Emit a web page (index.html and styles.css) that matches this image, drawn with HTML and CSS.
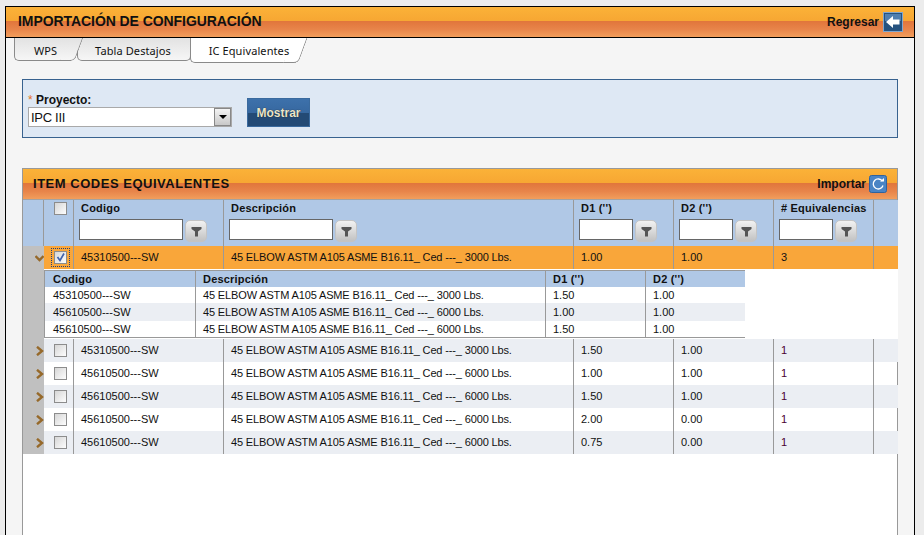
FILE: index.html
```html
<!DOCTYPE html>
<html lang="es">
<head>
    <meta charset="UTF-8">
    <title>Importación de Configuración</title>
    <link rel="stylesheet" href="styles.css">
</head>
<body>

<div class="ventana">
    <div class="barra barra-principal">
        <span class="barra-titulo">IMPORTACIÓN DE CONFIGURACIÓN</span>
        <a class="barra-accion">Regresar
            <svg class="icono-regresar" width="20" height="20" viewBox="0 0 20 20">
                <rect x="0.5" y="0.5" width="19" height="19" fill="#25527f" stroke="#7fa6cf"/>
                <rect x="2" y="2" width="16" height="7" fill="#4f7fb0"/>
                <path d="M3 10 L10 4 V7.5 H16.5 V12.5 H10 V16 Z" fill="#fff"/>
            </svg>
        </a>
    </div>

    <div class="contenido">
        <div class="tabs">
            <div class="tab tab-wps">WPS</div>
            <div class="tab tab-tabla">Tabla Destajos</div>
            <div class="tab tab-activa">IC Equivalentes</div>
        </div>

        <div class="panel-filtro">
            <div class="campo">
                <label class="campo-label"><span class="requerido">*</span> Proyecto:</label>
                <div class="combo">
                    <span class="combo-texto">IPC III</span>
                    <span class="combo-boton"><i class="combo-flecha"></i></span>
                </div>
            </div>
            <button class="btn-mostrar" type="button">Mostrar</button>
        </div>

        <div class="grid">
            <div class="barra barra-grid">
                <span class="grid-titulo">ITEM CODES EQUIVALENTES</span>
                <a class="barra-accion accion-importar">Importar
                    <svg class="icono-importar" width="18" height="18" viewBox="0 0 18 18">
                        <rect x="0.5" y="0.5" width="17" height="17" rx="2" fill="#4a84c4" stroke="#2f639e"/>
                        <path d="M13.4 6.2 A5 5 0 1 0 14 10.5" fill="none" stroke="#fff" stroke-width="1.3"/>
                        <path d="M11 6.5 H15 V3 Z" fill="#fff"/>
                    </svg>
                </a>
            </div>

            <table class="tabla">
                <colgroup>
                    <col class="c-exp"><col class="c-chk"><col class="c-cod"><col class="c-des">
                    <col class="c-num"><col class="c-num"><col class="c-num"><col class="c-fin">
                </colgroup>
                <thead>
                    <tr>
                        <th></th>
                        <th class="th-chk"><span class="chk"></span></th>
                        <th><div class="th-texto">Codigo</div>
                            <div class="filtro"><input class="filtro-input f-cod" type="text"><span class="filtro-btn"><svg width="11" height="11" viewBox="0 0 11 11"><path d="M0.5 1 H10.5 V3 L7 5.5 V10.5 H4 V5.5 L0.5 3 Z" fill="#555"/></svg></span></div></th>
                        <th><div class="th-texto">Descripción</div>
                            <div class="filtro"><input class="filtro-input f-cod" type="text"><span class="filtro-btn"><svg width="11" height="11" viewBox="0 0 11 11"><path d="M0.5 1 H10.5 V3 L7 5.5 V10.5 H4 V5.5 L0.5 3 Z" fill="#555"/></svg></span></div></th>
                        <th><div class="th-texto">D1 ('')</div>
                            <div class="filtro"><input class="filtro-input f-num" type="text"><span class="filtro-btn"><svg width="11" height="11" viewBox="0 0 11 11"><path d="M0.5 1 H10.5 V3 L7 5.5 V10.5 H4 V5.5 L0.5 3 Z" fill="#555"/></svg></span></div></th>
                        <th><div class="th-texto">D2 ('')</div>
                            <div class="filtro"><input class="filtro-input f-num" type="text"><span class="filtro-btn"><svg width="11" height="11" viewBox="0 0 11 11"><path d="M0.5 1 H10.5 V3 L7 5.5 V10.5 H4 V5.5 L0.5 3 Z" fill="#555"/></svg></span></div></th>
                        <th><div class="th-texto"># Equivalencias</div>
                            <div class="filtro"><input class="filtro-input f-num" type="text"><span class="filtro-btn"><svg width="11" height="11" viewBox="0 0 11 11"><path d="M0.5 1 H10.5 V3 L7 5.5 V10.5 H4 V5.5 L0.5 3 Z" fill="#555"/></svg></span></div></th>
                        <th class="sin-borde"></th>
                    </tr>
                </thead>
                <tbody>
                    <tr class="fila fila-sel">
                        <td class="exp"><svg class="flecha" width="9" height="7" viewBox="0 0 9 7"><path d="M0.5 1 L4.5 5 L8.5 1" fill="none" stroke="#96692a" stroke-width="2.4"/></svg></td>
                        <td class="td-chk"><span class="chk-foco"><span class="chk chk-on"><svg width="11" height="11" viewBox="0 0 11 11"><path d="M2.5 5 L5 8.5 L9 1.5" fill="none" stroke="#3f62ad" stroke-width="1.7"/></svg></span></span></td>
                        <td>45310500---SW</td>
                        <td class="desc">45 ELBOW ASTM A105 ASME B16.11_ Ced ---_ 3000 Lbs.</td>
                        <td>1.00</td><td>1.00</td><td>3</td><td class="sin-borde"></td>
                    </tr>
                    <tr class="fila-detalle">
                        <td class="exp"></td>
                        <td colspan="7" class="td-detalle">
                            <table class="detalle">
                                <colgroup><col class="d-cod"><col class="d-des"><col class="c-num"><col class="d-fin"></colgroup>
                                <thead>
                                    <tr><th>Codigo</th><th>Descripción</th><th>D1 ('')</th><th class="sin-borde">D2 ('')</th></tr>
                                </thead>
                                <tbody>
                                    <tr><td>45310500---SW</td><td class="desc">45 ELBOW ASTM A105 ASME B16.11_ Ced ---_ 3000 Lbs.</td><td>1.50</td><td class="sin-borde">1.00</td></tr>
                                    <tr class="alt"><td>45610500---SW</td><td class="desc">45 ELBOW ASTM A105 ASME B16.11_ Ced ---_ 6000 Lbs.</td><td>1.00</td><td class="sin-borde">1.00</td></tr>
                                    <tr><td>45610500---SW</td><td class="desc">45 ELBOW ASTM A105 ASME B16.11_ Ced ---_ 6000 Lbs.</td><td>1.50</td><td class="sin-borde">1.00</td></tr>
                                </tbody>
                            </table>
                        </td>
                    </tr>
                    <tr class="fila alt">
                        <td class="exp"><svg class="flecha" width="8" height="10" viewBox="0 0 8 10"><path d="M1 0.8 L6 5 L1 9.2" fill="none" stroke="#96692a" stroke-width="2.4"/></svg></td>
                        <td class="td-chk"><span class="chk"></span></td>
                        <td>45310500---SW</td><td class="desc">45 ELBOW ASTM A105 ASME B16.11_ Ced ---_ 3000 Lbs.</td>
                        <td>1.50</td><td>1.00</td><td class="eq">1</td><td class="sin-borde"></td>
                    </tr>
                    <tr class="fila">
                        <td class="exp"><svg class="flecha" width="8" height="10" viewBox="0 0 8 10"><path d="M1 0.8 L6 5 L1 9.2" fill="none" stroke="#96692a" stroke-width="2.4"/></svg></td>
                        <td class="td-chk"><span class="chk"></span></td>
                        <td>45610500---SW</td><td class="desc">45 ELBOW ASTM A105 ASME B16.11_ Ced ---_ 6000 Lbs.</td>
                        <td>1.00</td><td>1.00</td><td class="eq">1</td><td class="sin-borde"></td>
                    </tr>
                    <tr class="fila alt">
                        <td class="exp"><svg class="flecha" width="8" height="10" viewBox="0 0 8 10"><path d="M1 0.8 L6 5 L1 9.2" fill="none" stroke="#96692a" stroke-width="2.4"/></svg></td>
                        <td class="td-chk"><span class="chk"></span></td>
                        <td>45610500---SW</td><td class="desc">45 ELBOW ASTM A105 ASME B16.11_ Ced ---_ 6000 Lbs.</td>
                        <td>1.50</td><td>1.00</td><td class="eq">1</td><td class="sin-borde"></td>
                    </tr>
                    <tr class="fila">
                        <td class="exp"><svg class="flecha" width="8" height="10" viewBox="0 0 8 10"><path d="M1 0.8 L6 5 L1 9.2" fill="none" stroke="#96692a" stroke-width="2.4"/></svg></td>
                        <td class="td-chk"><span class="chk"></span></td>
                        <td>45610500---SW</td><td class="desc">45 ELBOW ASTM A105 ASME B16.11_ Ced ---_ 6000 Lbs.</td>
                        <td>2.00</td><td>0.00</td><td class="eq">1</td><td class="sin-borde"></td>
                    </tr>
                    <tr class="fila alt">
                        <td class="exp"><svg class="flecha" width="8" height="10" viewBox="0 0 8 10"><path d="M1 0.8 L6 5 L1 9.2" fill="none" stroke="#96692a" stroke-width="2.4"/></svg></td>
                        <td class="td-chk"><span class="chk"></span></td>
                        <td>45610500---SW</td><td class="desc">45 ELBOW ASTM A105 ASME B16.11_ Ced ---_ 6000 Lbs.</td>
                        <td>0.75</td><td>0.00</td><td class="eq">1</td><td class="sin-borde"></td>
                    </tr>
                </tbody>
            </table>
        </div>
    </div>
</div>

</body>
</html>
```

FILE: styles.css
```css
* {
    box-sizing: border-box;
}
html, body {
    height: 100%;
    overflow: hidden;
}
body {
    margin: 0;
    padding: 6px 9px 0 5px;
    background-color: #ececec;
    font-family: "Liberation Sans", Arial, sans-serif;
    font-size: 11px;
    color: #111;
}
.ventana {
    height: 529px;
    border: 1px solid #000;
    border-bottom: none;
    background-color: #f5f5f5;
}
.barra {
    display: flex;
    align-items: center;
    justify-content: space-between;
    background: linear-gradient(#fbb238 0%, #f7a733 45%, #e1763c 48%, #e8854a 75%, #f29e5c 100%);
}
.barra-principal {
    height: 31px;
    padding: 0 11px 0 12px;
    border-bottom: 1px solid #000;
}
.barra-titulo {
    padding-bottom: 2px;
    font-size: 14px;
    font-weight: bold;
    letter-spacing: -0.07px;
    color: #111;
}
.barra-accion {
    display: flex;
    align-items: center;
    gap: 4px;
    font-size: 12px;
    font-weight: bold;
    color: #111;
}
.accion-importar {
    gap: 3px;
}
.contenido {
    padding: 0 16px;
}

/* tabs */
.tabs {
    display: flex;
    height: 25px;
    margin-left: -8px;
}
.tab {
    position: relative;
    height: 23px;
    padding-top: 5px;
    font-family: "Noto Sans", sans-serif;
    font-size: 11px;
    letter-spacing: 0.1px;
    text-align: center;
    border-left: 1px solid #8a8a8a;
    border-bottom: 1px solid #8a8a8a;
    border-bottom-left-radius: 5px;
    background: linear-gradient(#e2e2e2, #f6f6f6);
}
.tab::after {
    content: "";
    position: absolute;
    z-index: -1;
    top: 0;
    right: -8px;
    bottom: -1px;
    width: 14px;
    border-right: 1px solid #8a8a8a;
    border-bottom: 1px solid #8a8a8a;
    border-bottom-right-radius: 5px;
    background: linear-gradient(#e2e2e2, #f6f6f6);
    transform: skewX(-20deg);
}
.tab-wps {
    width: 57px;
    padding-left: 5px;
    z-index: 1;
}
.tab-tabla {
    width: 114px;
    margin-left: 6px;
    padding-right: 2px;
    border-right: 1px solid #8a8a8a;
    border-bottom-right-radius: 5px;
}
.tab-tabla::after {
    display: none;
}
.tab-activa {
    width: 106px;
    height: 25px;
    margin-left: -1px;
    padding-left: 11px;
    background: #fff;
    z-index: 2;
}
.tab-activa::after {
    background: #fff;
    right: -7px;
}

/* panel de filtro */
.panel-filtro {
    display: flex;
    align-items: flex-end;
    gap: 15px;
    height: 59px;
    margin-top: 16px;
    padding: 0 5px 10px;
    border: 1px solid #38628f;
    background-color: #dee8f4;
}
.campo-label {
    display: block;
    font-size: 12px;
    font-weight: bold;
    line-height: 13px;
}
.requerido {
    color: #e8731e;
    font-weight: normal;
}
.combo {
    display: flex;
    align-items: center;
    width: 204px;
    height: 20px;
    border: 1px solid #a9a9a9;
    background-color: #fff;
}
.combo-texto {
    flex: 1;
    padding-left: 2px;
    font-size: 13px;
    letter-spacing: -0.3px;
}
.combo-boton {
    display: flex;
    align-items: center;
    justify-content: center;
    width: 17px;
    height: 18px;
    border: 1px solid #888;
    background: linear-gradient(#f4f4f4, #c8c8c8);
}
.combo-flecha {
    width: 0;
    height: 0;
    border-left: 4px solid transparent;
    border-right: 4px solid transparent;
    border-top: 4px solid #000;
}
.btn-mostrar {
    width: 63px;
    height: 29px;
    padding: 0;
    border: 1px solid #3a6a9e;
    background: linear-gradient(#3d71ab 0%, #3768a0 50%, #234a75 52%, #234a75 100%);
    color: #e9e6cc;
    font-family: "Liberation Sans", Arial, sans-serif;
    font-size: 12px;
    font-weight: bold;
    text-shadow: 0 0 1px #111;
}

/* grid */
.grid {
    height: 367px;
    margin-top: 30px;
    border: 1px solid #999;
    border-bottom: none;
    background-color: #fff;
}
.barra-grid {
    height: 31px;
    padding: 0 10px;
    border-bottom: 1px solid #a3a3a3;
}
.grid-titulo {
    padding-bottom: 2px;
    font-size: 13px;
    font-weight: bold;
    letter-spacing: 0.52px;
}
.tabla {
    table-layout: fixed;
    width: 875px;
    border-collapse: separate;
    border-spacing: 0;
}
.c-exp { width: 21px; }
.c-chk { width: 30px; }
.c-cod { width: 150px; }
.c-des { width: 350px; }
.c-num { width: 100px; }
.c-fin { width: 24px; }
.d-cod { width: 151px; }
.d-des { width: 350px; }
.d-fin { width: 99px; }

.tabla > thead th {
    height: 46px;
    padding: 0 0 0 5px;
    vertical-align: top;
    text-align: left;
    font-weight: bold;
    border-right: 1px solid #999;
    background-color: #b0c8e6;
}
.th-texto {
    padding: 2px 0 0 2px;
    line-height: 13px;
    height: 19px;
    letter-spacing: 0.2px;
}
.filtro {
    display: flex;
    align-items: flex-start;
    gap: 2px;
}
.filtro-input {
    height: 21px;
    padding: 0;
    border: 1px solid #666;
    background-color: #fff;
}
.f-cod { width: 104px; }
.f-num { width: 54px; }
.filtro-btn {
    display: flex;
    align-items: center;
    justify-content: center;
    width: 22px;
    height: 22px;
    margin-top: 1px;
    border: 1px solid #c4c4c4;
    border-radius: 5px;
    background: linear-gradient(#f2f2f2, #c2c2c2);
}
.tabla > thead th.th-chk {
    padding: 2px 0 0 10px;
}
.fila td {
    height: 23px;
    padding: 0 0 2px 7px;
    white-space: nowrap;
    border-right: 1px solid #999;
}
.fila td.eq {
    color: #4a0030;
}
.desc {
    letter-spacing: -0.14px;
}
.alt td {
    background-color: #ebeef3;
}
.fila-sel td {
    background-color: #f9a63a;
}
.tabla td.exp {
    padding: 0;
    text-align: right;
    background-color: #c0c0c0;
    border-right: none;
}
.flecha {
    display: block;
    margin: 1px 0 0 auto;
}
.tabla td.td-chk {
    padding: 0 0 0 10px;
}
.tabla td.sin-borde,
.tabla th.sin-borde {
    border-right: none;
}
.chk {
    display: block;
    width: 13px;
    height: 13px;
    border: 1px solid #8c8c8c;
    background: linear-gradient(135deg, #d6d6d6, #fdfdfd);
}
.chk-on svg {
    display: block;
}
.chk-foco {
    display: block;
    width: 19px;
    height: 19px;
    margin-left: -3px;
    padding: 2px;
    border: 1px dotted #1f3f80;
}

/* detalle */
.td-detalle {
    padding: 1px 0 1px 0;
    background-color: #fff;
}
.detalle {
    table-layout: fixed;
    width: 701px;
    border-collapse: separate;
    border-spacing: 0;
    border-top: 1px solid #999;
    border-bottom: 1px solid #999;
    border-left: 1px solid #999;
}
.detalle th {
    height: 16px;
    padding: 0 0 0 7px;
    text-align: left;
    font-weight: bold;
    letter-spacing: 0.2px;
    border-right: 1px solid #999;
    background-color: #b0c8e6;
}
.detalle td {
    height: 16px;
    padding: 0 0 0 7px;
    white-space: nowrap;
    border-right: 1px solid #999;
}
.detalle tr > :first-child {
    padding-left: 8px;
}
.detalle tr.alt td {
    height: 18px;
}
```
